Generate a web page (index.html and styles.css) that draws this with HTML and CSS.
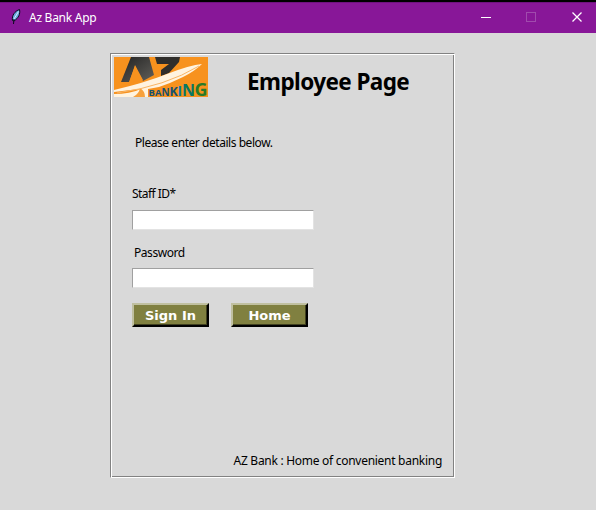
FILE: index.html
```html
<!DOCTYPE html>
<html lang="en">
<head>
<meta charset="utf-8">
<title>Az Bank App</title>
<link rel="stylesheet" href="styles.css">
</head>
<body>
<header class="titlebar">
  <svg class="feather" width="12" height="18" viewBox="0 0 12 18"><path d="M9.500 1.500C5 3 1.500 7.500 2.500 12.500L4 13C8.500 10 10.500 6 9.500 1.500z" fill="#6aa9e0" stroke="#0a0a1c"/><path d="M8.500 3.500L4 11" stroke="#d8ecff"/><path d="M4 11L3.500 16" stroke="#0a0a1c"/></svg>
  <span class="app-name">Az Bank App</span>
  <svg class="controls" width="110" height="31" viewBox="0 0 110 31" fill="none" shape-rendering="crispEdges"><path d="M5 15.500h10" stroke="#fff"/><path d="M50.500 10.500h9v9h-9z" stroke="#a04bad"/><path d="M96.500 10.500l9 9m0-9l-9 9" stroke="#fff" stroke-width="1.300" shape-rendering="auto"/></svg>
</header>
<main class="panel">
  <div class="heading">
    <svg class="logo" width="94" height="40" viewBox="0 0 94 40">
      <defs><linearGradient id="ink" x1="0" y1="0" x2="1" y2="1"><stop offset="0" stop-color="#222"/><stop offset="1" stop-color="#62605b"/></linearGradient></defs>
      <rect width="94" height="40" fill="#f7921e"/>
      <path d="M17 0h18l5 18-11 6-8-15-6 16H7z" fill="url(#ink)"/>
      <path d="M21 8l8 15-14 3z" fill="#f7921e"/>
      <path d="M41 0h25l-1 5-10 11-8 3V13l8-6H43z" fill="#302e2b"/>
      <path d="M0 33Q30 26 53 17T88 7Q81 14 69 20T45 30L34 32V40H0v-3q16 0 27-5Q15 33 0 35z" fill="#fff3df"/>
      <path d="M26 31q5 3 5 9H19q6-3 7-9z" fill="#f7a13c"/>
      <path d="M3 36Q52 29 85 9" fill="none" stroke="#f9b565" stroke-width="1"/>
      <g class="logo-text"><text><tspan x="34.500" y="39" font-size="9.500">B</tspan><tspan x="41" font-size="9.500">A</tspan><tspan x="47.500" font-size="10">N</tspan><tspan x="55.500" font-size="12.500">K</tspan><tspan x="63.500" font-size="14" fill="#087ba7">I</tspan><tspan x="68" font-size="16" fill="#087763">N</tspan><tspan x="80.500" font-size="18" fill="#287a28">G</tspan></text></g>
    </svg>
    <h1 class="title">Employee Page</h1>
  </div>
  <form class="form">
    <p class="intro">Please enter details below.</p>
    <label class="staff-label" for="staff">Staff ID*</label>
    <input class="field" id="staff" type="text">
    <label class="pass-label" for="pass">Password</label>
    <input class="field" id="pass" type="password">
    <div class="actions"><button class="action" type="button">Sign In</button><button class="action" type="button">Home</button></div>
  </form>
  <footer class="footer">AZ Bank : Home of convenient banking</footer>
</main>
</body>
</html>
```

FILE: styles.css
```css
* { box-sizing: border-box; }
body { margin: 0; height: 510px; background: #d9d9d9; color: #000; font: 12px/16px "Noto Sans", sans-serif; letter-spacing: -.45px; overflow: hidden; }
.titlebar { display: flex; align-items: flex-start; height: 33px; border-top: 2px solid #000; background: #881798; box-shadow: inset 0 1px #701280; color: #fff; }
.feather { margin: 6px 0 0 10px; }
.app-name { margin: 8px 0 0 7px; letter-spacing: -.27px; }
.controls { margin-left: auto; margin-right: 10px; }
.panel { display: flex; flex-direction: column; width: 345px; height: 425px; margin: 20px 0 0 110px; padding: 1px; border: 1px solid; border-color: #828282 #fff #fff #828282; box-shadow: inset 1px 1px #fff, inset -1px -1px #828282; }
.heading { display: flex; padding: 2px 0 0 2px; }
.logo { flex: none; overflow: visible; }
.title { margin: 9px 0 -1px 39px; font: bold 22.5px/32px "Noto Sans", sans-serif; letter-spacing: -.58px; }
.form { display: flex; flex-direction: column; padding-left: 20px; }
.intro { margin: 38px 0 0 3px; }
.staff-label { margin-top: 35px; letter-spacing: -.55px; }
.field { width: 182px; height: 20px; margin-top: 8px; border: 1px solid; border-color: #a0a0a0 #e3e3e3 #e3e3e3 #a0a0a0; background: #fff; padding: 1px; outline: 0; }
.pass-label { margin: 15px 0 0 2px; }
.pass-label + .field { margin-top: 7px; }
.actions { display: flex; gap: 22px; margin-top: 15px; }
.action { width: 77px; height: 24px; padding: 1px 0 0; border: 2px solid; border-color: #c0c0a0 #000 #000 #c0c0a0; box-shadow: inset -1px -1px #40401f; background: #808040; color: #fff; font: bold 13px/18px "DejaVu Sans", sans-serif; letter-spacing: 0; }
.footer { margin: auto 11px 7px auto; letter-spacing: -.28px; }
.logo-text { font-family: "Open Sans", sans-serif; font-weight: bold; letter-spacing: 0; fill: #17516e; }
```
